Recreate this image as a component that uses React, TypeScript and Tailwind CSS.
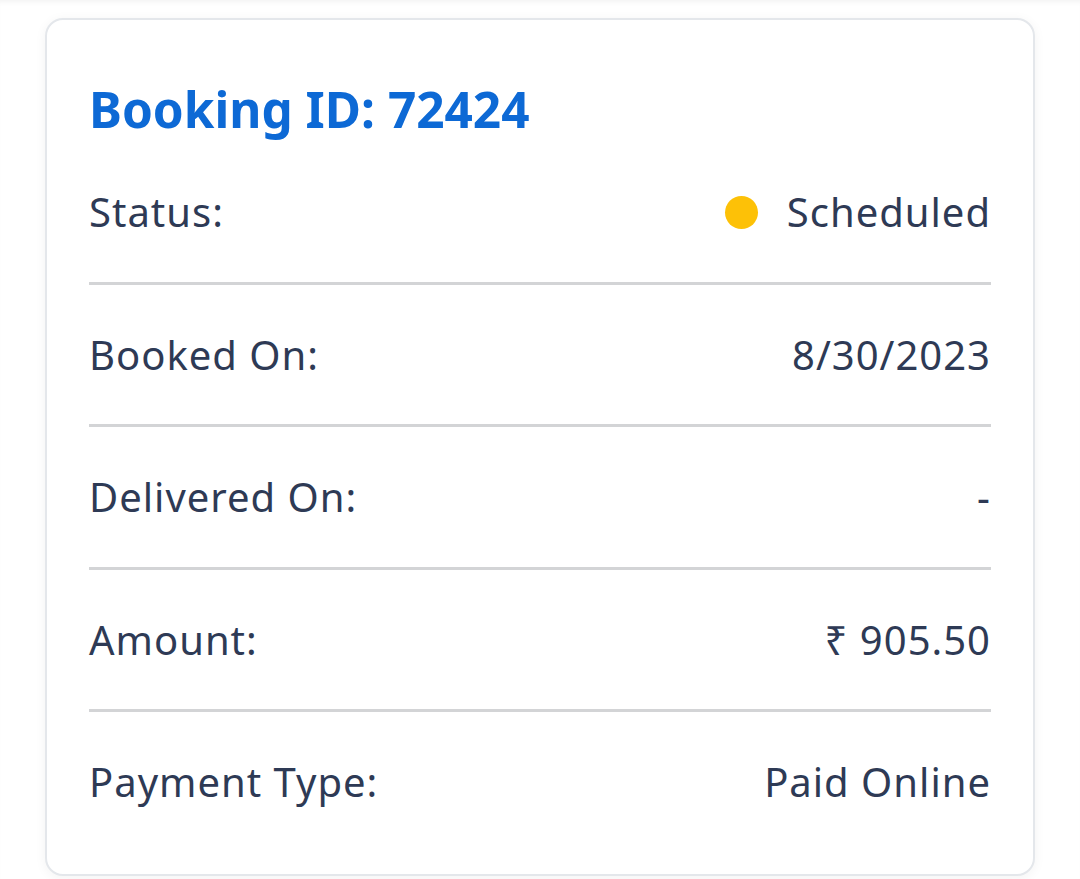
import React from "react";

const rows: { label: string; value: React.ReactNode }[] = [
  {
    label: "Status:",
    value: (
      <span className="flex items-center">
        <span className="inline-block h-[33px] w-[33px] rounded-full bg-[#fdc107]" />
        <span className="ml-[29px]">Scheduled</span>
      </span>
    ),
  },
  { label: "Booked On:", value: "8/30/2023" },
  { label: "Delivered On:", value: "-" },
  { label: "Amount:", value: "₹ 905.50" },
  { label: "Payment Type:", value: "Paid Online" },
];

export default function App() {
  return (
    <div
      className="min-h-[879px] w-full bg-white pt-[18px] shadow-[inset_0_5px_5px_-3px_rgba(0,0,0,0.05)]"
      style={{ fontFamily: '"Noto Sans", "Open Sans", "Liberation Sans", sans-serif' }}
    >
      <div className="ml-[45px] w-[990px] rounded-[18px] border-2 border-[#e4e7eb] bg-white px-[42px] pt-[55px] pb-[64px] shadow-[0_2px_12px_rgba(0,0,0,0.05)]">
        <h1 className="text-[49.5px] font-bold leading-[68px] text-[#0d69d5]">Booking ID: 72424</h1>
        <div className="mt-[41px]">
          {rows.map((r, i) => (
            <div key={r.label}>
              <div
                className={`flex items-center justify-between text-[40px] leading-[56px] tracking-[1px] text-[#2e3a55] ${
                  i === 0 ? "" : "pt-[42px]"
                } ${i === rows.length - 1 ? "" : "pb-[41.5px]"}`}
              >
                <span>{r.label}</span>
                {r.value}
              </div>
              {i < rows.length - 1 && <div className="h-[3px] bg-[#d3d4d6]" />}
            </div>
          ))}
        </div>
      </div>
    </div>
  );
}
